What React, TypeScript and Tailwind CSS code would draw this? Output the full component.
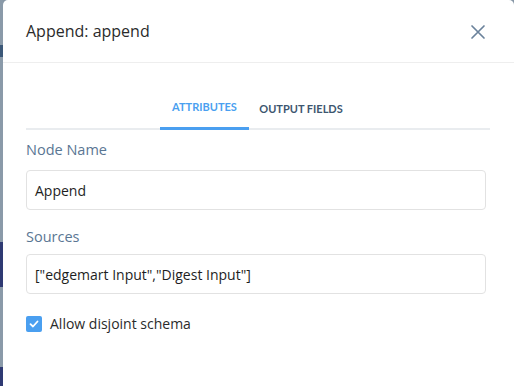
import React from "react";

export default function App() {
  return (
    <div className="w-[514px] h-[386px] flex overflow-hidden bg-[#8797a6]" style={{ fontFamily: "'Open Sans', Lato, sans-serif" }}>
      <div className="w-[3px] shrink-0 flex flex-col">
        <div className="h-[45px] bg-[#8a9aa9]" />
        <div className="h-[12px] bg-[#3c5878]" />
        <div className="h-[185px] bg-[#8a9aa9]" />
        <div className="h-[45px] bg-[#2f3a73]" />
        <div className="h-[80px] bg-[#8a9aa9]" />
        <div className="flex-1 bg-[#2f3a73]" />
      </div>
      <div className="flex-1 bg-white rounded-t-[5px] flex flex-col">
        <div className="h-[63px] border-b border-[#eeeeee] flex items-center justify-between pl-[23px] pr-[28px]">
          <span className="text-[16px] text-[#2b2b2b]">Append: append</span>
          <svg width="16" height="16" viewBox="0 0 16 16" className="mt-[1px]">
            <path d="M2 2 L14 14 M14 2 L2 14" stroke="#6b829b" strokeWidth="1.7" strokeLinecap="round" />
          </svg>
        </div>
        <div className="pl-[23px] pr-[24px] pt-[33px]" style={{ fontFamily: "Lato, sans-serif" }}>
          <div className="flex justify-center border-b-2 border-[#e9ecef]">
            <div className="w-[89px] h-[34px] flex items-center justify-center border-b-[3px] border-[#4a9ff0] -mb-[2px] ml-[-3px]">
              <span className="text-[11px] font-bold text-[#4a9ff0] pb-[8px]">ATTRIBUTES</span>
            </div>
            <div className="w-[104px] h-[34px] flex items-center justify-center -mb-[2px]">
              <span className="text-[11px] font-bold text-[#3d566f] pb-[8px]">OUTPUT FIELDS</span>
            </div>
          </div>
        </div>
        <div className="pl-[23px] pr-[28px] pt-[10px] flex flex-col">
          <label className="text-[14.5px] text-[#5a7693] leading-[20px]">Node Name</label>
          <div className="mt-[10px] h-[40px] border border-[#e2e2e2] rounded-[4px] flex items-center pl-[8px]">
            <span className="text-[14px] text-[#1e1e1e]">Append</span>
          </div>
          <label className="mt-[17px] text-[14.5px] text-[#5a7693] leading-[20px]">Sources</label>
          <div className="mt-[7px] h-[40px] border border-[#e2e2e2] rounded-[4px] flex items-center pl-[8px]">
            <span className="text-[14px] text-[#1e1e1e]">["edgemart Input","Digest Input"]</span>
          </div>
          <div className="mt-[19px] flex items-center gap-[8px]">
            <div className="w-[16px] h-[16px] rounded-[2px] bg-[#4a9ff0] flex items-center justify-center">
              <svg width="10" height="10" viewBox="0 0 10 10">
                <path d="M1.5 5.2 L4 7.5 L8.5 2.5" stroke="white" strokeWidth="1.8" fill="none" strokeLinecap="round" strokeLinejoin="round" />
              </svg>
            </div>
            <span className="text-[14px] text-[#2b2b2b]">Allow disjoint schema</span>
          </div>
        </div>
      </div>
    </div>
  );
}
